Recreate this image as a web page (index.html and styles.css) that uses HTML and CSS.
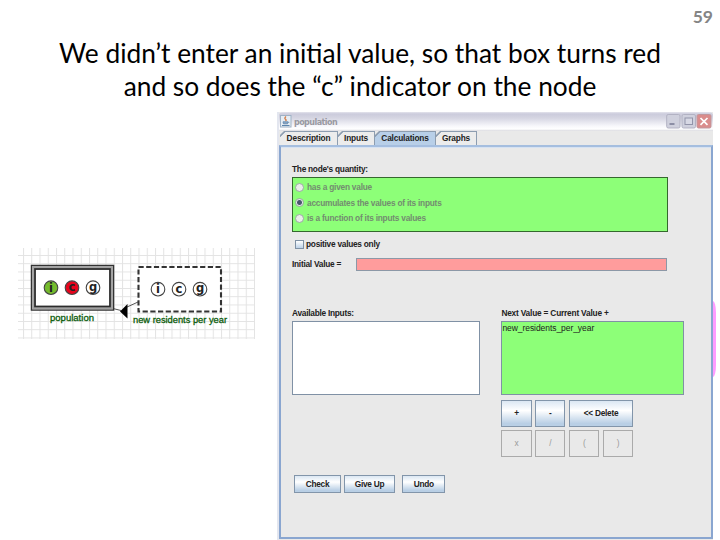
FILE: index.html
```html
<!DOCTYPE html>
<html lang="en">
<head>
<meta charset="utf-8">
<title>population</title>
<link rel="stylesheet" href="styles.css">
</head>
<body>
<main class="slide">
  <div class="page-number">59</div>
  <h1 class="title"><span class="line">We didn’t enter an initial value, so that box turns red</span><span class="line">and so does the “c” indicator on the node</span></h1>
  <div class="content">
    <svg class="diagram" width="237" height="91" viewBox="18 248 237 91">
      <defs>
        <pattern id="grid" x="23" y="255" width="8.25" height="8.25" patternUnits="userSpaceOnUse">
          <path d="M.5 0V8.25M0 .5H8.25" stroke="#e3e3e3" stroke-width="1" fill="none"/>
        </pattern>
      </defs>
      <rect x="18" y="248" width="237" height="91" fill="url(#grid)"/>
      <path d="M113 308.500L121 310.500M126 307.500L138 302" stroke="#555" stroke-width="1"/>
      <path d="M120 311.500L127.500 304V318.500Z" fill="#000"/>
      <rect x="31.500" y="265.500" width="82" height="44.500" fill="#fff" stroke="#333" stroke-width="1.500"/>
      <rect x="33.200" y="267.200" width="78.600" height="41.100" fill="none" stroke="#a2a2a2" stroke-width="2.200"/>
      <rect x="35" y="269" width="75" height="37.500" fill="none" stroke="#2b2b2b" stroke-width="1.800"/>
      <rect x="138.500" y="267" width="82.500" height="44.500" fill="#fff" stroke="#333" stroke-width="2.100" stroke-dasharray="5.200 2.500"/>
      <g stroke="#444" stroke-width="1.100">
        <circle cx="51" cy="287.700" r="6.800" fill="#74bb2c"/>
        <circle cx="72" cy="287.700" r="6.800" fill="#e8041c"/>
        <circle cx="93" cy="287.700" r="6.800" fill="#fff"/>
        <circle cx="158" cy="289.200" r="6.800" fill="#fff"/>
        <circle cx="179" cy="289.200" r="6.800" fill="#fff"/>
        <circle cx="200" cy="289.200" r="6.800" fill="#fff"/>
      </g>
      <g class="letters">
        <text x="51" y="291.500">i</text><text x="72" y="291">c</text><text x="93" y="290.500">g</text>
        <text x="158" y="293">i</text><text x="179" y="292.500">c</text><text x="200" y="292">g</text>
      </g>
      <text class="caption" x="50" y="321" textLength="44" lengthAdjust="spacingAndGlyphs">population</text>
      <text class="caption" x="133" y="322.500" textLength="94" lengthAdjust="spacingAndGlyphs">new residents per year</text>
    </svg>
    <section class="window">
      <header class="titlebar">
        <svg class="java" width="12" height="13" viewBox="0 0 12 13"><rect x=".5" y=".5" width="10.500" height="11.500" fill="#e6edf4" stroke="#9fb2c6"/><path d="M6 1.500Q4 3.200 5.500 4.200T5.300 6" stroke="#d07c48" stroke-width="1.300" fill="none"/><path d="M3 6.800H8L7.500 8.800H3.500ZM8 7.300H9.300" stroke="#5d84ab" stroke-width=".8" fill="#8facc8"/><path d="M2 10.500H9.500" stroke="#5d84ab"/></svg>
        <span class="caption-text">population</span>
        <svg class="controls" width="46" height="15" viewBox="0 0 46 15"><rect x=".7" y=".5" width="13.300" height="13.500" rx="1.500" fill="#cfd0dd" stroke="#b2b2c3"/><rect x="16" y=".5" width="13.500" height="13.500" rx="1.500" fill="#cfd0dd" stroke="#b2b2c3"/><rect x="31" y=".5" width="14" height="13.500" rx="1.500" fill="#da8c8c" stroke="#c0979d"/><path d="M3.500 10H8.500" stroke="#8c8ea5" stroke-width="2"/><rect x="19" y="4" width="7.500" height="6.500" fill="#d7d8e4" stroke="#9294a9"/><path d="M34.500 4L41.500 10.800M41.500 4L34.500 10.800" stroke="#fff" stroke-width="1.700"/></svg>
      </header>
      <nav class="tabs">
        <span class="tab t1">Description</span><span class="tab t2">Inputs</span><span class="tab t3 active">Calculations</span><span class="tab t4">Graphs</span>
      </nav>
      <div class="panel">
        <div class="label heading">The node's quantity:</div>
        <div class="quantity">
          <div class="option"><i class="radio"></i><span>has a given value</span></div>
          <div class="option"><i class="radio on"></i><span>accumulates the values of its inputs</span></div>
          <div class="option"><i class="radio"></i><span>is a function of its inputs values</span></div>
        </div>
        <div class="positive"><i class="checkbox"></i><span>positive values only</span></div>
        <div class="initial"><span class="initial-label">Initial Value =</span><div class="field"></div></div>
        <div class="lists">
          <div class="available"><div class="label">Available Inputs:</div><div class="list"></div></div>
          <div class="next">
            <div class="label next-label">Next Value = Current Value +</div>
            <div class="list filled">new_residents_per_year</div>
            <div class="keys"><span class="button">+</span><span class="button">-</span><span class="button wide">&lt;&lt; Delete</span><span class="button off">x</span><span class="button off">/</span><span class="button off">(</span><span class="button off">)</span></div>
          </div>
        </div>
        <div class="actions"><span class="button check">Check</span><span class="button give">Give Up</span><span class="button undo">Undo</span></div>
      </div>
    </section>
    <div class="pink"></div>
  </div>
</main>
</body>
</html>
```
FILE: styles.css
```css
* { box-sizing: border-box; }
body { margin: 0; background: #fff; font-family: "Liberation Sans", sans-serif; }
.slide { width: 720px; height: 540px; overflow: hidden; }
.page-number { height: 36px; padding: 7px 7px 0 0; text-align: right; font: bold 17.5px/20px Lato, sans-serif; color: #858585; }
.title { margin: 0; height: 76px; padding-top: 1px; font: 400 26.3px/33px Lato, sans-serif; color: #000; }
.line { display: block; width: 720px; text-align: center; white-space: nowrap; }
.content { display: flex; align-items: flex-start; }
.diagram { flex: none; margin: 136px 22px 0 18px; }
.letters text { font: bold 11.5px "DejaVu Sans", sans-serif; text-anchor: middle; fill: #222; }
.caption { font: 9.5px "Liberation Sans", sans-serif; fill: #0b5c0b; stroke: #0b5c0b; stroke-width: .3px; }
.window { flex: none; width: 436px; height: 428px; background: #e9e9e9; border-left: 2px solid #e3e6ef; font-weight: bold; font-size: 8.3px; letter-spacing: -.25px; color: #222; }
.titlebar { display: flex; align-items: flex-start; height: 19px; padding: 2px 1px 0 1px; border-radius: 4px 4px 0 0; background: linear-gradient(#e4e4ec 0, #cbcbdc 2px, #d5d5e2 6px, #f7f7fb 14px, #fff 17px, #d9d9df 19px); }
.java { margin-top: 1px; }
.caption-text { font: bold 8px/17px "DejaVu Sans", sans-serif; color: #9999a1; margin: 0 auto 0 2px; letter-spacing: -.55px; }
.tabs { display: flex; height: 14px; padding-left: 1px; }
.tab { height: 14px; border-top: 1px solid #8d9db0; border-right: 1px solid #8d9db0; line-height: 13px; text-align: center; white-space: nowrap; background: linear-gradient(135deg, #8d9db0 3.4px, #ececec 4.2px); clip-path: polygon(4px 0, 100% 0, 100% 100%, 0 100%, 0 4px); letter-spacing: -.17px; }
.tab.active { background: linear-gradient(135deg, #8d9db0 3.4px, #b8cfe8 4.2px); }
.t1 { width: 58px; } .t2 { width: 37px; } .t3 { width: 61px; } .t4 { width: 41px; }
.panel { height: 394px; border: 2px solid #8aa6d0; border-top-color: #a5bedf; box-shadow: inset 0 1px #d6e2f2; padding-left: 11px; }
.label { height: 12px; line-height: 12px; white-space: nowrap; }
.heading { margin-top: 16px; }
.next-label { letter-spacing: -.19px; }
.quantity { width: 376px; height: 55px; margin-top: 2px; padding: 1.500px 0 0 2px; background: #8dff78; border: 1.5px solid #35682e; }
.option { display: flex; align-items: center; height: 15.500px; color: #738c70; white-space: nowrap; letter-spacing: -.22px; }
.radio { width: 9px; height: 9px; margin-right: 3px; border: 1px solid #9ba9a2; border-radius: 50%; background: #e9eee9; }
.radio.on { background: radial-gradient(#49566d 0 2px, #e2e8e6 3px); }
.positive { display: flex; align-items: center; height: 12px; margin: 6px 0 0 3px; white-space: nowrap; }
.checkbox { width: 9px; height: 9px; margin-right: 2px; border: 1px solid #7f91a5; background: linear-gradient(#fff, #bdd2e8); }
.initial { display: flex; align-items: center; height: 14px; margin-top: 7px; }
.initial-label { width: 64px; white-space: nowrap; }
.field { width: 311px; height: 13px; background: #ff9c9c; border: 1px solid #8c98a7; }
.lists { display: flex; height: 151px; margin-top: 36px; }
.available { width: 209.400px; }
.list { width: 188px; height: 74px; margin-top: 2.400px; border: 1px solid #8091a5; background: #fff; }
.filled { width: 183px; background: #8dff78; font-weight: normal; font-size: 8.5px; letter-spacing: -.06px; line-height: 12px; white-space: nowrap; }
.keys { display: flex; flex-wrap: wrap; gap: 3px 3.500px; width: 140px; margin-top: 4.600px; }
.button { display: flex; justify-content: center; align-items: center; width: 30.300px; height: 27px; border: 1px solid #8295aa; background: linear-gradient(#dbe7f3 0, #fff 38%, #b9cfe5 90%); white-space: nowrap; }
.wide { width: 64px; }
.off { background: #e9e9e9; border-color: #aaa; color: #999; font-weight: normal; }
.actions { display: flex; margin: 17px 0 0 2px; }
.actions .button { height: 18px; }
.check { width: 47px; } .give { width: 51px; margin-left: 3px; } .undo { width: 43px; margin-left: 7.300px; }
.pink { width: 2.500px; height: 76px; margin-top: 189px; background: #ff9cff; border-radius: 0 3px 3px 0 / 0 12px 12px 0; }
```
